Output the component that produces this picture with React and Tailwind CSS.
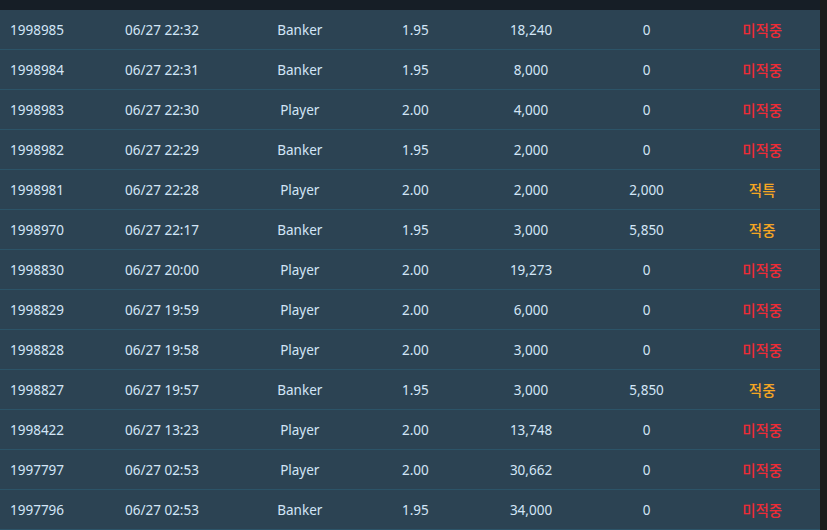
import React from "react";

const rows = [
  ["1998985", "06/27 22:32", "Banker", "1.95", "18,240", "0", "미적중"],
  ["1998984", "06/27 22:31", "Banker", "1.95", "8,000", "0", "미적중"],
  ["1998983", "06/27 22:30", "Player", "2.00", "4,000", "0", "미적중"],
  ["1998982", "06/27 22:29", "Banker", "1.95", "2,000", "0", "미적중"],
  ["1998981", "06/27 22:28", "Player", "2.00", "2,000", "2,000", "적특"],
  ["1998970", "06/27 22:17", "Banker", "1.95", "3,000", "5,850", "적중"],
  ["1998830", "06/27 20:00", "Player", "2.00", "19,273", "0", "미적중"],
  ["1998829", "06/27 19:59", "Player", "2.00", "6,000", "0", "미적중"],
  ["1998828", "06/27 19:58", "Player", "2.00", "3,000", "0", "미적중"],
  ["1998827", "06/27 19:57", "Banker", "1.95", "3,000", "5,850", "적중"],
  ["1998422", "06/27 13:23", "Player", "2.00", "13,748", "0", "미적중"],
  ["1997797", "06/27 02:53", "Player", "2.00", "30,662", "0", "미적중"],
  ["1997796", "06/27 02:53", "Banker", "1.95", "34,000", "0", "미적중"],
];

export default function App() {
  return (
    <div
      className="w-[827px] h-[530px] overflow-hidden bg-[#1b1b1b] flex flex-col text-[13.5px] text-[#d3e6f7]"
      style={{ fontFamily: '"Noto Sans", "Noto Sans CJK KR", sans-serif' }}
    >
      <div className="h-[10px] w-[820px] bg-[#161e26] shrink-0" />
      <div className="w-[820px] bg-[#2c4353] flex-1">
        {rows.map((r, i) => (
          <div
            key={i}
            className="grid grid-cols-[115px_127px_repeat(5,1fr)] h-10 pt-[2px] items-center border-b border-[#2c5468]"
          >
            <div className="pl-[10px]">{r[0]}</div>
            <div className="pl-[10px]">{r[1]}</div>
            <div className="text-center">{r[2]}</div>
            <div className="text-center">{r[3]}</div>
            <div className="text-center">{r[4]}</div>
            <div className="text-center">{r[5]}</div>
            <div
              className={
                "text-center text-[14.5px] font-medium " +
                (r[6] === "미적중" ? "text-[#ee2b36]" : "text-[#f5a623]")
              }
            >
              {r[6]}
            </div>
          </div>
        ))}
      </div>
    </div>
  );
}
